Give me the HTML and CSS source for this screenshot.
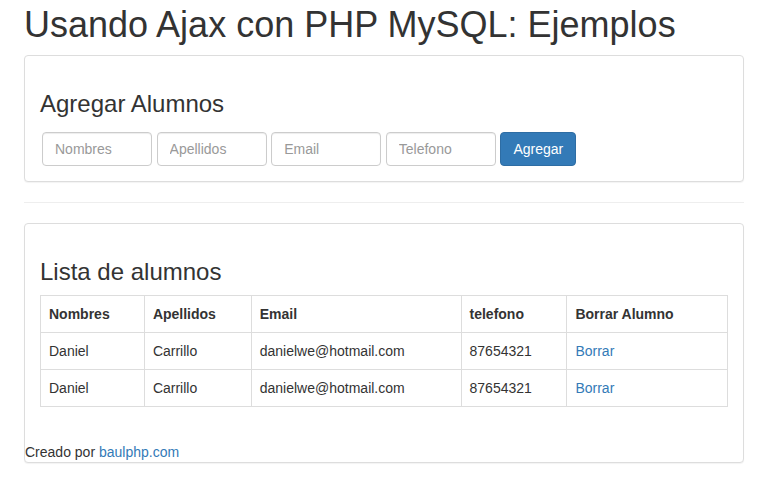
FILE: index.html
```html
<!DOCTYPE html>
<html lang="es">
<head>
<meta charset="utf-8">
<title>Usando Ajax con PHP MySQL: Ejemplos</title>
<link rel="stylesheet" href="styles.css">
</head>
<body>
<div class="container">
  <h1 class="page-title">Usando Ajax con PHP MySQL: Ejemplos</h1>
  <div class="panel">
    <div class="panel-body">
      <h3 class="panel-heading-text form-heading">Agregar Alumnos</h3>
      <form class="form-inline">
        <input class="form-control" type="text" placeholder="Nombres">
        <input class="form-control" type="text" placeholder="Apellidos">
        <input class="form-control" type="text" placeholder="Email">
        <input class="form-control" type="text" placeholder="Telefono">
        <button class="btn btn-primary" type="button">Agregar</button>
      </form>
    </div>
  </div>
  <hr class="divider">
  <div class="panel">
    <div class="panel-body">
      <h3 class="panel-heading-text">Lista de alumnos</h3>
      <table class="table">
        <colgroup>
          <col class="c1"><col class="c2"><col class="c3"><col class="c4"><col class="c5">
        </colgroup>
        <thead>
          <tr><th>Nombres</th><th>Apellidos</th><th>Email</th><th>telefono</th><th>Borrar Alumno</th></tr>
        </thead>
        <tbody>
          <tr><td>Daniel</td><td>Carrillo</td><td>danielwe@hotmail.com</td><td>87654321</td><td><a href="#">Borrar</a></td></tr>
          <tr><td>Daniel</td><td>Carrillo</td><td>danielwe@hotmail.com</td><td>87654321</td><td><a href="#">Borrar</a></td></tr>
        </tbody>
      </table>
    </div>
    <div class="credits">Creado por <a href="#">baulphp.com</a></div>
  </div>
</div>
</body>
</html>
```
FILE: styles.css
```css
* { box-sizing: border-box; }
html, body { margin: 0; padding: 0; background: #fff; }
body {
  font-family: "Liberation Sans", Arial, Helvetica, sans-serif;
  font-size: 14px;
  line-height: 20px;
  color: #333;
}
a { color: #337ab7; text-decoration: none; }
.container {
  width: 744px;
  padding-left: 24px;
}
.page-title {
  font-size: 36px;
  font-weight: 500;
  line-height: 1.1;
  margin: 5px 0 10px;
  color: #333;
}
.panel {
  border: 1px solid #ddd;
  border-radius: 4px;
  box-shadow: 0 1px 1px rgba(0,0,0,.05);
  margin-bottom: 20px;
  background: #fff;
}
.panel-body { padding: 15px; }
.panel-heading-text {
  font-size: 24px;
  font-weight: 500;
  line-height: 1.1;
  margin: 20px 0 10px;
  color: #333;
}
.form-heading { margin-bottom: 15px; }
.form-inline {
  display: flex;
  gap: 4.6px;
  padding-left: 2px;
}
.form-control {
  width: 110px;
  height: 34px;
  padding: 6px 12px;
  font-family: inherit;
  font-size: 14px;
  line-height: 20px;
  color: #555;
  border: 1px solid #ccc;
  border-radius: 4px;
  box-shadow: inset 0 1px 1px rgba(0,0,0,.075);
  background: #fff;
  margin: 0;
}
.form-control::placeholder { color: #999; }
.btn {
  height: 34px;
  padding: 6px 12px;
  font-family: inherit;
  font-size: 14px;
  line-height: 20px;
  border-radius: 4px;
  margin: 0;
  cursor: pointer;
}
.btn-primary {
  color: #fff;
  background: #337ab7;
  border: 1px solid #2e6da4;
}
.divider {
  border: 0;
  border-top: 1px solid #eee;
  margin: 20px 0;
  height: 0;
}
.table {
  width: 688px;
  border-collapse: collapse;
  border: 1px solid #ddd;
  margin-bottom: 20px;
}
.c1 { width: 104px; }
.c2 { width: 107px; }
.c3 { width: 210px; }
.c4 { width: 106px; }
.c5 { width: 161px; }
.table th, .table td {
  border: 1px solid #ddd;
  padding: 8px;
  text-align: left;
  vertical-align: top;
  line-height: 20px;
}
.table th { font-weight: bold; }
.credits { line-height: 20px; }
```
